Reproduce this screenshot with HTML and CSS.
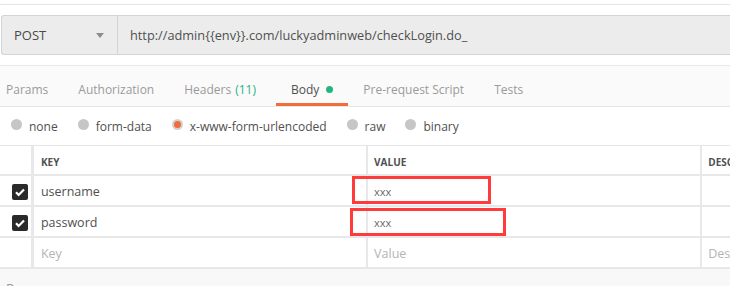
FILE: index.html
```html
<!DOCTYPE html>
<html lang="en">
<head>
    <meta charset="UTF-8">
    <title>Postman - checkLogin</title>
    <link rel="stylesheet" href="styles.css">
</head>
<body>
    <div class="app">
        <div class="topstrip"></div>

        <div class="request">
            <div class="urlbar">
                <div class="method">
                    <span>POST</span>
                    <span class="caret"></span>
                </div>
                <div class="url">http://admin{{env}}.com/luckyadminweb/checkLogin.do_</div>
            </div>
        </div>

        <nav class="tabs">
            <span class="tab">Params</span>
            <span class="tab">Authorization</span>
            <span class="tab">Headers <em class="count">(11)</em></span>
            <span class="tab active">Body <i class="dot"></i></span>
            <span class="tab">Pre-request Script</span>
            <span class="tab">Tests</span>
        </nav>

        <div class="body-types">
            <label class="radio"><i class="circle"></i>none</label>
            <label class="radio"><i class="circle"></i>form-data</label>
            <label class="radio"><i class="circle on"></i>x-www-form-urlencoded</label>
            <label class="radio"><i class="circle"></i>raw</label>
            <label class="radio"><i class="circle"></i>binary</label>
        </div>

        <div class="params">
            <div class="row head">
                <div class="cell check"></div>
                <div class="cell key">KEY</div>
                <div class="cell value">VALUE</div>
                <div class="cell desc">DESCRIPTION</div>
            </div>
            <div class="row">
                <div class="cell check"><span class="box">
                    <svg viewBox="0 0 16 16" width="16" height="16"><path d="M4 8.3l2.6 2.6L12 5.4" fill="none" stroke="#fff" stroke-width="2.2"/></svg>
                </span></div>
                <div class="cell key">username</div>
                <div class="cell value small">xxx</div>
                <div class="cell desc"></div>
            </div>
            <div class="row">
                <div class="cell check"><span class="box">
                    <svg viewBox="0 0 16 16" width="16" height="16"><path d="M4 8.3l2.6 2.6L12 5.4" fill="none" stroke="#fff" stroke-width="2.2"/></svg>
                </span></div>
                <div class="cell key">password</div>
                <div class="cell value small">xxx</div>
                <div class="cell desc"></div>
            </div>
            <div class="row">
                <div class="cell check"></div>
                <div class="cell key placeholder">Key</div>
                <div class="cell value placeholder">Value</div>
                <div class="cell desc placeholder">Description</div>
            </div>

            <!-- red marks drawn over the screenshot -->
            <div class="mark mark-1"></div>
            <div class="mark mark-2"></div>
        </div>

        <div class="response">Response</div>
    </div>
</body>
</html>
```

FILE: styles.css
```css
body {
    margin: 0;
    font-family: "Open Sans", "Liberation Sans", sans-serif;
    font-size: 12px;
    color: #505050;
    background: #fff;
}
.app {
    width: 730px;
    height: 286px;
    overflow: hidden;
}
.topstrip {
    height: 4px;
    border-bottom: 1px solid #e6e6e6;
}
.request {
    padding: 10px 0 10px 1px;
    border-bottom: 1px solid #e8e8e8;
}
.urlbar {
    display: flex;
    height: 38px;
    border: 1px solid #d4d4d4;
    border-right: none;
    border-radius: 3px 0 0 3px;
    background: #ececec;
}
.method {
    width: 116px;
    box-sizing: border-box;
    display: flex;
    align-items: center;
    justify-content: space-between;
    padding: 0 12px;
    border-right: 1px solid #d4d4d4;
    font-size: 13px;
    color: #4a4a4a;
}
.caret {
    width: 0;
    height: 0;
    border-left: 4px solid transparent;
    border-right: 4px solid transparent;
    border-top: 5px solid #8c8c8c;
    margin-right: 1px;
}
.url {
    display: flex;
    align-items: center;
    padding-left: 12px;
    font-size: 12.75px;
    color: #505050;
    white-space: nowrap;
}
.tabs {
    display: flex;
    height: 40px;
    padding-left: 6px;
    background: #fafafa;
    border-bottom: 1px solid #e6e6e6;
}
.tab {
    display: flex;
    align-items: center;
    margin-right: 30px;
    padding-top: 9px;
    border-bottom: 3px solid transparent;
    font-size: 12px;
    color: #9a9a9a;
    white-space: nowrap;
    box-sizing: border-box;
}
.tab .count {
    font-style: normal;
    color: #26b47f;
    margin-left: 4px;
}
.tab.active {
    color: #505050;
    padding-left: 15px;
    padding-right: 15px;
    margin-left: -10px;
    margin-right: 15px;
    border-bottom-color: #f26b3a;
}
.dot {
    width: 7px;
    height: 7px;
    border-radius: 50%;
    background: #26b47f;
    margin-left: 7px;
}
.body-types {
    display: flex;
    align-items: center;
    height: 38px;
    padding-left: 11px;
    border-bottom: 1px solid #e6e6e6;
}
.radio {
    display: flex;
    align-items: center;
    margin-right: 20px;
    font-size: 12px;
    color: #505050;
}
.circle {
    width: 11px;
    height: 11px;
    border-radius: 50%;
    background: #c6c6c6;
    margin-right: 7px;
    margin-top: -3px;
    box-sizing: border-box;
}
.circle.on {
    background: #f26b3a;
    border: 2px solid #d2d2d2;
}
.params {
    position: relative;
    width: 800px;
}
.row {
    display: flex;
    height: 29px;
    border-bottom: 2px solid #e8e8e8;
}
.row.head {
    height: 28px;
    font-size: 10px;
    font-weight: bold;
    color: #505050;
}
.cell {
    display: flex;
    align-items: center;
    box-sizing: border-box;
    white-space: nowrap;
    padding-top: 2px;
}
.check {
    width: 31px;
    justify-content: flex-end;
    padding-right: 3px;
}
.key {
    width: 336px;
    border-left: 3px solid #e8e8e8;
    padding-left: 7px;
    font-size: 12.5px;
}
.value {
    width: 335px;
    border-left: 2px solid #e8e8e8;
    padding-left: 6px;
    font-size: 12.5px;
}
.head .key, .head .value, .head .desc {
    font-size: 10px;
    padding-top: 3px;
}
.desc {
    width: 100px;
    border-left: 2px solid #e8e8e8;
    padding-left: 6px;
    font-size: 12.5px;
}
.value.small {
    font-size: 11px;
    color: #6a6a6a;
}
.placeholder {
    color: #b4b4b4;
}
.box {
    display: block;
    width: 16px;
    height: 16px;
    border-radius: 2px;
    background: #2a2a2a;
}
.box svg {
    display: block;
}
.mark {
    position: absolute;
    border: 3px solid #ff3b3b;
    box-sizing: border-box;
}
.mark-1 {
    left: 352px;
    top: 30px;
    width: 139px;
    height: 28px;
}
.mark-2 {
    left: 350px;
    top: 62px;
    width: 156px;
    height: 28px;
}
.response {
    height: 40px;
    background: #f8f8f8;
    padding: 10px 0 0 6px;
    color: #9a9a9a;
    font-size: 13px;
}
```
